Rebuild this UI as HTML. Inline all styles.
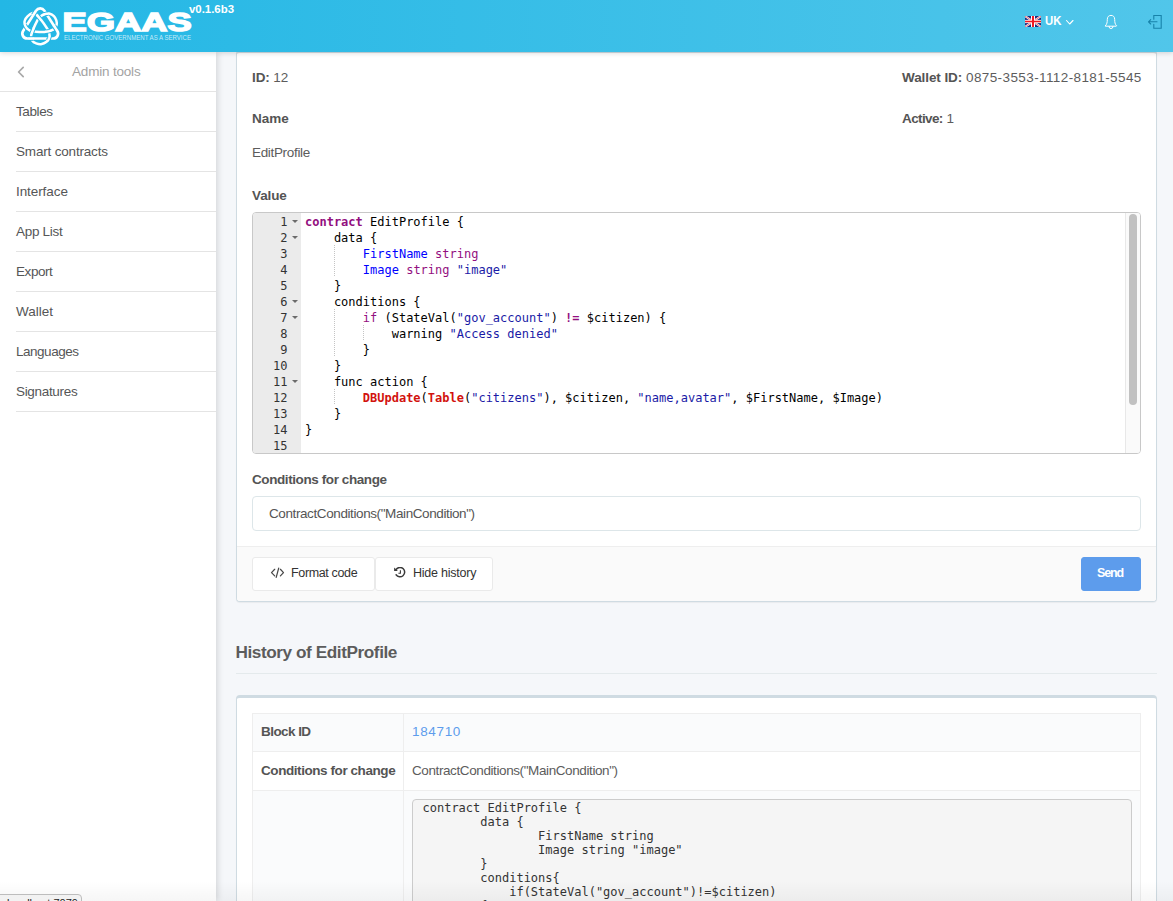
<!DOCTYPE html>
<html lang="en">
<head>
<meta charset="utf-8">
<title>EGAAS - EditProfile</title>
<style>
*{box-sizing:border-box}
html,body{margin:0;padding:0}
body{width:1173px;height:901px;overflow:hidden;position:relative;background:#f5f7fa;font-family:"Liberation Sans",sans-serif;font-size:13.5px;color:#5c5c5c}
b,.b{font-weight:700;color:#545454}
.abs{position:absolute}
/* header */
#hdr{position:absolute;left:0;top:0;width:1173px;height:52px;background:linear-gradient(to right,#23b7e5 0%,#51c6ea 100%);box-shadow:0 1px 5px rgba(0,0,0,.16);z-index:20}
#hdr svg{position:absolute;left:0;top:0}
/* sidebar */
#side{position:absolute;left:0;top:52px;width:216px;height:849px;background:#fff;z-index:10;box-shadow:2px 0 6px rgba(0,0,0,.13)}
#side .ttl{position:absolute;left:0;top:0;width:216px;height:40px;border-bottom:1px solid #e4e4e4;color:#a3a3a3;text-align:center;line-height:40px;font-size:13.5px}
#side .ttl span{position:absolute;left:72px;top:0}
#side .it{position:absolute;left:16px;width:200px;height:40px;border-bottom:1px solid #e4e4e4;line-height:39px;color:#555657;font-size:13.5px}
/* main */
.panel{position:absolute;left:236px;width:921px;background:#fff;border:1px solid #cfdbe2;border-radius:4px;box-shadow:0 1px 1px rgba(0,0,0,.05)}
.lbl{position:absolute;white-space:nowrap;line-height:16px}
.num{letter-spacing:.4px}
.mono{font-family:"DejaVu Sans Mono","Liberation Mono",monospace}
#ed{position:absolute;left:252px;top:212px;width:889px;height:242px;border:1px solid #c8c8c8;border-radius:4px;background:#fff;overflow:hidden}
#ed .gut{position:absolute;left:0;top:0;width:48px;height:240px;background:#ebebeb}
#ed .ln{position:absolute;left:0;width:47px;height:16px;line-height:18px;font-size:12px;color:#333;text-align:right;padding-right:12.5px}
#ed .cl{position:absolute;left:52px;height:16px;line-height:18px;font-size:12px;color:#000;white-space:pre}
.kw{color:#930f80;font-weight:700}
.id{color:#0000ff}
.st{color:#1a1aa6}
.ty{color:#930f80}
.op{color:#930f80;font-weight:700}
.fn{color:#d2120e;font-weight:700}
.btn{position:absolute;top:557px;height:34px;border:1px solid #eaeaea;background:#fff;border-radius:3px;color:#333;font-size:12.5px;line-height:30px;white-space:nowrap}
.panel .foot{position:absolute;left:0;bottom:0;width:919px;height:55px;background:#fafafa;border-top:1px solid #eeeeee;border-radius:0 0 3px 3px}
.fold{position:absolute;left:38.5px;width:0;height:0;border-left:3px solid transparent;border-right:3px solid transparent;border-top:3px solid #6b6b6b}
.ig{position:absolute;width:1px;background:repeating-linear-gradient(to bottom,#c4c4c4 0,#c4c4c4 1px,transparent 1px,transparent 2px)}
#ed .sb{position:absolute;right:0;top:0;width:15px;height:240px;background:#fafafa;border-left:1px solid #e8e8e8}
#ed .sb i{position:absolute;left:3px;top:1px;width:8px;height:191px;border-radius:4px;background:#c1c1c1}
.inp{position:absolute;left:252px;top:496px;width:889px;height:35px;border:1px solid #dde6e9;border-radius:4px;background:#fff;color:#3a3f51}
.inp span{position:absolute;left:16px;top:9px;letter-spacing:-.4px;line-height:16px;white-space:nowrap;color:#555}
.btn.send{background:#5d9cec;border-color:#5d9cec;color:#fff;font-weight:700}
.h3{position:absolute;left:235.5px;top:641px;font-size:17.2px;letter-spacing:-.43px;font-weight:700;color:#5c5c5c;line-height:22px;white-space:nowrap}
.hr{position:absolute;left:236px;top:673px;width:921px;height:1px;background:#e4eaec}
.panel.p2{border-top:3px solid #cfdbe2}
.tb{position:absolute;left:252px;top:713px;width:889px;height:220px;border:1px solid #eee;border-bottom:0}
.tb .row{position:absolute;left:0;width:887px;border-bottom:1px solid #eee;background:#fff}
.tb .row.odd{background:#fafbfc}
.tb .col{position:absolute;left:150px;top:0;width:1px;height:220px;background:#eee}
.tb .tl{position:absolute;line-height:16px;white-space:nowrap}
.tb .lnk{color:#5d9cec}
.tb pre{position:absolute;left:159px;top:85px;width:720px;height:200px;margin:0;border:1px solid #ccc;border-radius:4px;background:#f5f5f5;color:#333;font-size:12px;line-height:14px;padding:1px 9.5px;tab-size:8;-moz-tab-size:8;overflow:hidden}
#fade{position:absolute;left:0;top:881px;width:1173px;height:20px;background:linear-gradient(to bottom,rgba(0,0,0,0),rgba(0,0,0,.035));z-index:30;pointer-events:none}
#status{position:absolute;left:-2px;top:894px;width:84px;height:20px;border:1px solid #bdbdbd;border-radius:0 4px 0 0;background:#f2f2f2;color:#222;font-size:11px;line-height:16px;padding-left:8px;z-index:40}
</style>
</head>
<body>

<!-- ================= HEADER ================= -->
<div id="hdr">
<svg width="1173" height="52" viewBox="0 0 1173 52">
  <g id="logo-icon" fill="none" stroke="#fff" stroke-width="3" stroke-linecap="round" stroke-linejoin="round">
    <path d="M44.34 10.61L57.32 31.02A4.88 4.88 0 0 1 53.21 38.52L27.23 38.52A4.88 4.88 0 0 1 23.11 31.02L36.10 10.61A4.88 4.88 0 0 1 44.34 10.61Z" stroke-width="2.7"/>
    <path d="M32.16 13.18C30.65 13.46 28.74 15.25 27.52 16.45C26.30 17.65 25.32 19.18 24.84 20.36C24.35 21.54 24.35 22.35 24.59 23.53C24.84 24.71 25.41 26.26 26.30 27.44C27.20 28.62 28.50 29.92 29.96 30.61C31.43 31.30 32.69 31.37 35.09 31.59C37.49 31.81 41.36 32.26 44.37 31.93C47.38 31.60 51.12 30.79 53.16 29.63C55.19 28.48 56.05 26.54 56.57 25.00C57.10 23.45 56.78 21.82 56.33 20.36C55.88 18.89 54.99 17.31 53.89 16.21C52.79 15.11 51.16 14.13 49.74 13.77C48.31 13.40 46.73 13.68 45.34 14.01C43.96 14.34 42.74 14.70 41.44 15.72C40.14 16.74 39.24 16.86 37.53 20.11C35.82 23.37 32.00 31.75 31.18 35.25C30.37 38.75 31.83 39.77 32.65 41.11C33.46 42.45 34.68 42.80 36.07 43.31C37.45 43.81 39.20 44.38 40.95 44.14C42.70 43.89 45.18 42.92 46.56 41.84C47.95 40.77 48.80 39.12 49.25 37.69C49.70 36.27 49.66 34.92 49.25 33.30C48.84 31.67 48.92 31.02 46.81 27.93C44.69 24.83 39.00 17.20 36.55 14.74C34.11 12.28 33.67 12.89 32.16 13.18Z" stroke-width="2.5"/>
    <path d="M48.76 13.61L48.31 13.59L47.86 13.60L47.41 13.64L46.97 13.69L46.52 13.76L46.09 13.85L45.66 13.94L45.24 14.03L44.83 14.13L44.43 14.24L44.14 14.33" stroke="#25b7e5" stroke-width="4.4" stroke-linecap="butt"/>
    <path d="M49.31 13.67L48.87 13.62L48.42 13.60L47.97 13.60L47.53 13.63L47.08 13.68L46.63 13.74L46.20 13.82L45.76 13.91L45.34 14.01L44.93 14.11L44.53 14.21L44.14 14.33L43.75 14.46L43.65 14.49" stroke-width="2.5" stroke-linecap="butt"/>
    <path d="M53.94 25.69L54.26 26.20L54.58 26.71L54.90 27.21L55.23 27.72L55.55 28.23L55.87 28.74L56.20 29.24L56.52 29.75" stroke="#25b7e5" stroke-width="4.6" stroke-linecap="butt"/>
    <path d="M53.69 25.31L54.02 25.82L54.34 26.33L54.66 26.83L54.99 27.34L55.31 27.85L55.63 28.36L55.95 28.86L56.28 29.37L56.60 29.88L56.76 30.13" stroke-width="2.7" stroke-linecap="butt"/>
    <path d="M47.75 40.64L48.05 40.22L48.32 39.79L48.57 39.35L48.79 38.90L48.98 38.46L49.14 38.02L49.28 37.58L49.40 37.16L49.48 36.74L49.54 36.32" stroke="#25b7e5" stroke-width="4.4" stroke-linecap="butt"/>
    <path d="M47.42 41.04L47.75 40.64L48.05 40.22L48.32 39.79L48.57 39.35L48.79 38.90L48.98 38.46L49.14 38.02L49.28 37.58L49.40 37.16L49.48 36.74L49.54 36.32L49.57 35.89L49.57 35.78" stroke-width="2.5" stroke-linecap="butt"/>
    <path d="M33.69 38.52L33.08 38.52L32.48 38.52L31.88 38.52L31.28 38.52L30.68 38.52L30.08 38.52L29.48 38.52L28.88 38.52" stroke="#25b7e5" stroke-width="4.6" stroke-linecap="butt"/>
    <path d="M34.14 38.52L33.53 38.52L32.93 38.52L32.33 38.52L31.73 38.52L31.13 38.52L30.53 38.52L29.93 38.52L29.33 38.52L28.73 38.52L28.43 38.52" stroke-width="2.7" stroke-linecap="butt"/>
    <path d="M24.87 24.57L25.00 24.97L25.16 25.38L25.34 25.79L25.53 26.20L25.75 26.59L25.98 26.98L26.23 27.35L26.51 27.70L26.81 28.06L27.13 28.42L27.21 28.51" stroke="#25b7e5" stroke-width="4.4" stroke-linecap="butt"/>
    <path d="M24.72 24.08L24.84 24.47L24.97 24.87L25.12 25.28L25.29 25.69L25.48 26.10L25.69 26.50L25.92 26.88L26.17 27.26L26.44 27.62L26.73 27.97L27.04 28.33L27.38 28.69L27.64 28.95" stroke-width="2.5" stroke-linecap="butt"/>
    <path d="M33.19 15.17L33.52 14.66L33.84 14.16L34.16 13.65L34.48 13.14L34.81 12.64L35.13 12.13L35.45 11.62L35.77 11.11" stroke="#25b7e5" stroke-width="4.6" stroke-linecap="butt"/>
    <path d="M32.95 15.55L33.27 15.04L33.60 14.54L33.92 14.03L34.24 13.52L34.56 13.02L34.89 12.51L35.21 12.00L35.53 11.49L35.86 10.99L36.02 10.73" stroke-width="2.7" stroke-linecap="butt"/>
    <path d="M33.46 28.91L32.76 30.63L32.13 32.26L31.74 33.38" stroke="#25b7e5" stroke-width="4.4" stroke-linecap="butt"/>
    <path d="M33.83 28.03L33.10 29.78L32.43 31.46L31.86 33.02L31.62 33.73" stroke-width="2.5" stroke-linecap="butt"/>
    <path d="M46.24 31.68L47.21 31.51L48.18 31.31L49.13 31.09L50.05 30.85L50.93 30.58" stroke="#25b7e5" stroke-width="4.4" stroke-linecap="butt"/>
    <path d="M45.76 31.75L46.72 31.60L47.69 31.41L48.65 31.21L49.59 30.97L50.50 30.72L51.35 30.44" stroke-width="2.5" stroke-linecap="butt"/>
    <path d="M40.61 19.55L39.45 18.09L38.36 16.76L37.61 15.89" stroke="#25b7e5" stroke-width="4.4" stroke-linecap="butt"/>
    <path d="M41.21 20.32L40.02 18.81L38.89 17.40L37.85 16.16L37.16 15.38" stroke-width="2.5" stroke-linecap="butt"/>
  </g>
  <text x="62.6" y="30.6" font-family="Liberation Sans, sans-serif" font-weight="700" font-size="26.5" fill="#fff" stroke="#fff" stroke-width="1.5" stroke-linejoin="miter" textLength="129" lengthAdjust="spacingAndGlyphs">EGAAS</text>
  <text x="64" y="39.8" font-family="Liberation Sans, sans-serif" font-size="6.6" fill="#fff" fill-opacity=".72" textLength="127" lengthAdjust="spacingAndGlyphs">ELECTRONIC GOVERNMENT AS A SERVICE</text>
  <text x="189" y="13" font-family="Liberation Sans, sans-serif" font-weight="700" font-size="11" fill="#fff" textLength="45" lengthAdjust="spacingAndGlyphs">v0.1.6b3</text>
  <!-- UK flag -->
  <clipPath id="fc"><rect x="1025" y="16" width="16" height="11"/></clipPath>
  <g id="flag" clip-path="url(#fc)">
    <rect x="1025" y="16" width="16" height="11" fill="#1d2b80"/>
    <path d="M1025 16 L1041 27 M1041 16 L1025 27" stroke="#fff" stroke-width="1.9"/>
    <path d="M1025 16 L1041 27 M1041 16 L1025 27" stroke="#e8303a" stroke-width="0.7"/>
    <path d="M1033 16 V27" stroke="#fff" stroke-width="4"/>
    <path d="M1025 21.5 H1041" stroke="#fff" stroke-width="3.2"/>
    <path d="M1033 16 V27" stroke="#f01822" stroke-width="2"/>
    <path d="M1025 21.5 H1041" stroke="#f01822" stroke-width="1.6"/>
  </g>
  <!-- chevron -->
  <path d="M1066.5 20.5 L1069.7 24 L1073 20.5" fill="none" stroke="#fff" stroke-width="1.1" stroke-linecap="round" stroke-linejoin="round"/>
  <!-- bell -->
  <g fill="none" stroke="#fff" stroke-width="1" stroke-linecap="round" stroke-linejoin="round">
    <path d="M1105.4 25.8 C1107 24.2 1107.3 22.3 1107.3 19.4 C1107.3 16.7 1108.9 15.4 1111 15.4 C1113.1 15.4 1114.7 16.7 1114.7 19.4 C1114.7 22.3 1115 24.2 1116.6 25.8 L1116.3 26.2 L1105.7 26.2 Z"/>
    <path d="M1109 26.5 A2 2.1 0 0 0 1113 26.5"/>
  </g>
  <!-- logout -->
  <g fill="none" stroke="#1783aa" stroke-width="1.1" stroke-linecap="round" stroke-linejoin="round">
    <path d="M1153.8 19.2 V15.5 H1161.2 V28.2 H1153.8 V24.4" stroke-linejoin="miter"/>
    <path d="M1157 21.8 H1148.6 M1150.7 19.6 L1148.5 21.8 L1150.7 24"/>
  </g>
  <text x="1045" y="25.4" font-family="Liberation Sans, sans-serif" font-weight="700" font-size="13.6" fill="#fff" textLength="16.4" lengthAdjust="spacingAndGlyphs">UK</text>
</svg>
</div>

<!-- ================= SIDEBAR ================= -->
<div id="side">
  <div class="ttl"><svg class="abs" style="left:14px;top:11px" width="14" height="18" viewBox="14 63 14 18"><path d="M23.2 67.4 L18.6 72 L23.2 76.6" fill="none" stroke="#a9a9a9" stroke-width="1.7" stroke-linecap="round" stroke-linejoin="round"/></svg><span style="letter-spacing:-.19px">Admin tools</span></div>
  <div class="it" style="top:40px;letter-spacing:-0.41px">Tables</div>
  <div class="it" style="top:80px;letter-spacing:-0.18px">Smart contracts</div>
  <div class="it" style="top:120px;letter-spacing:-0.08px">Interface</div>
  <div class="it" style="top:160px;letter-spacing:-0.3px">App List</div>
  <div class="it" style="top:200px;letter-spacing:-0.43px">Export</div>
  <div class="it" style="top:240px;letter-spacing:-0.02px">Wallet</div>
  <div class="it" style="top:280px;letter-spacing:-0.48px">Languages</div>
  <div class="it" style="top:320px;letter-spacing:-0.32px">Signatures</div>
</div>

<!-- ================= MAIN ================= -->
<div class="panel" style="top:50px;height:552px;border-top:3px solid #cfdbe2">
  <div class="foot"></div>
</div>
<div class="lbl" style="left:252px;top:70px"><span style="letter-spacing:-.1px"><b>ID:</b> 12</span></div>
<div class="lbl" style="left:902px;top:70px"><b style="letter-spacing:-.08px">Wallet ID:</b> <span class="num">0875-3553-1112-8181-5545</span></div>
<div class="lbl" style="left:252px;top:111px"><b>Name</b></div>
<div class="lbl" style="left:902px;top:111px"><b style="letter-spacing:-.62px">Active:</b> 1</div>
<div class="lbl" style="left:252px;top:145px;letter-spacing:-.33px">EditProfile</div>
<div class="lbl" style="left:252px;top:188px"><b style="letter-spacing:-.12px">Value</b></div>
<div id="ed" class="mono">
  <div class="gut"></div>
  <div class="ln" style="top:0px">1</div>
  <i class="fold" style="top:7px"></i>
  <div class="cl" style="top:0px"><span class="kw">contract</span> EditProfile {</div>
  <div class="ln" style="top:16px">2</div>
  <i class="fold" style="top:23px"></i>
  <div class="cl" style="top:16px">    data {</div>
  <div class="ln" style="top:32px">3</div>
  <div class="cl" style="top:32px">        <span class="id">FirstName</span> <span class="ty">string</span></div>
  <div class="ln" style="top:48px">4</div>
  <div class="cl" style="top:48px">        <span class="id">Image</span> <span class="ty">string</span> <span class="st">"image"</span></div>
  <div class="ln" style="top:64px">5</div>
  <div class="cl" style="top:64px">    }</div>
  <div class="ln" style="top:80px">6</div>
  <i class="fold" style="top:87px"></i>
  <div class="cl" style="top:80px">    conditions {</div>
  <div class="ln" style="top:96px">7</div>
  <i class="fold" style="top:103px"></i>
  <div class="cl" style="top:96px">        <span class="ty">if</span> (StateVal(<span class="st">"gov_account"</span>) <span class="op">!=</span> $citizen) {</div>
  <div class="ln" style="top:112px">8</div>
  <div class="cl" style="top:112px">            warning <span class="st">"Access denied"</span></div>
  <div class="ln" style="top:128px">9</div>
  <div class="cl" style="top:128px">        }</div>
  <div class="ln" style="top:144px">10</div>
  <div class="cl" style="top:144px">    }</div>
  <div class="ln" style="top:160px">11</div>
  <i class="fold" style="top:167px"></i>
  <div class="cl" style="top:160px">    func action {</div>
  <div class="ln" style="top:176px">12</div>
  <div class="cl" style="top:176px">        <span class="fn">DBUpdate</span>(<span class="fn">Table</span>(<span class="st">"citizens"</span>), $citizen, <span class="st">"name,avatar"</span>, $FirstName, $Image)</div>
  <div class="ln" style="top:192px">13</div>
  <div class="cl" style="top:192px">    }</div>
  <div class="ln" style="top:208px">14</div>
  <div class="cl" style="top:208px">}</div>
  <div class="ln" style="top:224px">15</div>
  <i class="ig" style="left:80.8px;top:32px;height:32px"></i>
  <i class="ig" style="left:80.8px;top:96px;height:48px"></i>
  <i class="ig" style="left:109.6px;top:112px;height:16px"></i>
  <i class="ig" style="left:80.8px;top:176px;height:16px"></i>
  <div class="sb"><i></i></div>
</div>
<div class="lbl" style="left:252px;top:472px"><b style="letter-spacing:-.41px">Conditions for change</b></div>
<div class="inp"><span>ContractConditions("MainCondition")</span></div>
<div class="btn" style="left:252px;width:123px"><svg class="abs" style="left:17px;top:9px" width="16" height="13" viewBox="0 0 16 13" fill="none" stroke="#484848" stroke-width="1.25" stroke-linecap="round" stroke-linejoin="round"><path d="M4.7 2.3 L1.5 5.6 L4.7 8.9 M10.4 2.3 L13.5 5.6 L10.4 8.9 M8.7 1.1 L6.2 10.3"/></svg><span class="abs" style="left:38px;top:0;letter-spacing:-.35px">Format code</span></div>
<div class="btn" style="left:375px;width:118px"><svg class="abs" style="left:17px;top:9px" width="14" height="13" viewBox="0 0 14 13"><path d="M3.3 2.2 A4.7 4.7 0 1 1 3.1 7.8" fill="none" stroke="#3a3a3a" stroke-width="1.5" stroke-linecap="round"/><path d="M1.1 0.4 V4.1 H4.9 Z" fill="#3a3a3a"/><path d="M7.4 3.2 V6.3 H5.4" fill="none" stroke="#3a3a3a" stroke-width="1.1"/></svg><span class="abs" style="left:37px;top:0;letter-spacing:-.23px">Hide history</span></div>
<div class="btn send" style="left:1081px;width:60px"><span class="abs" style="left:15px;top:0;letter-spacing:-1.1px">Send</span></div>

<div class="h3">History of EditProfile</div>
<div class="hr"></div>

<div class="panel p2" style="top:695px;height:260px"></div>
<div class="tb">
  <div class="row odd" style="top:0;height:38px"></div>
  <div class="row" style="top:38px;height:39px"></div>
  <div class="row odd" style="top:77px;height:140px"></div>
  <div class="col"></div>
  <div class="tl" style="left:8px;top:10px;letter-spacing:-.56px"><b>Block ID</b></div>
  <div class="tl lnk" style="left:159px;top:10px;letter-spacing:.65px">184710</div>
  <div class="tl" style="left:8px;top:49px;letter-spacing:-.43px"><b class="cfc">Conditions for change</b></div>
  <div class="tl" style="left:159px;top:49px;letter-spacing:-.4px">ContractConditions("MainCondition")</div>
  <pre class="mono">contract EditProfile {
	data {
		FirstName string
		Image string "image"
	}
	conditions{
	    if(StateVal("gov_account")!=$citizen)
	{
		warning "Access denied"
	}
	}
</pre>
</div>
<div id="fade"></div>
<div id="status">localhost:7079</div>

</body>
</html>
